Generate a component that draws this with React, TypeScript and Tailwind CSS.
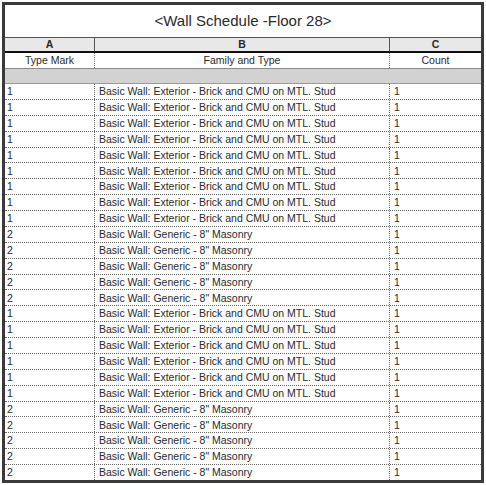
import React from 'react';

interface Row {
  mark: string;
  family: string;
  count: string;
}

const BRICK = 'Basic Wall: Exterior - Brick and CMU on MTL. Stud';
const MASONRY = 'Basic Wall: Generic - 8" Masonry';

// Schedule rows in the order they appear
const rows: Row[] = [
  ...Array(9).fill({ mark: '1', family: BRICK, count: '1' }),
  ...Array(5).fill({ mark: '2', family: MASONRY, count: '1' }),
  ...Array(6).fill({ mark: '1', family: BRICK, count: '1' }),
  ...Array(5).fill({ mark: '2', family: MASONRY, count: '1' }),
];

const App: React.FC = () => {
  return (
    <div
      className="w-[486px] h-[485px] bg-white pt-[2px] pl-[2px] text-[#2a2a2a]"
      style={{ fontFamily: '"Liberation Sans", Arial, sans-serif' }}
    >
      <div className="w-[482px] h-[481px] border-[3px] border-[#3a3a3a] flex flex-col overflow-hidden">
        {/* Title */}
        <div className="h-[33px] shrink-0 flex items-center justify-center text-[15px] border-b border-[#555]">
          &lt;Wall Schedule -Floor 28&gt;
        </div>

        {/* Column letters */}
        <div className="h-[15px] shrink-0 flex bg-[#e8e8e8] border-b-2 border-[#111] text-[10.5px] font-bold">
          <div className="w-[90px] flex items-center justify-center border-r border-[#555]">A</div>
          <div className="w-[295px] flex items-center justify-center border-r border-[#555]">B</div>
          <div className="flex-1 flex items-center justify-center">C</div>
        </div>

        {/* Field names */}
        <div className="h-[16px] shrink-0 flex border-b border-[#8a8a8a] text-[10.5px]">
          <div className="w-[90px] flex items-center justify-center border-r border-dotted border-[#777]">Type Mark</div>
          <div className="w-[295px] flex items-center justify-center border-r border-dotted border-[#777]">Family and Type</div>
          <div className="flex-1 flex items-center justify-center">Count</div>
        </div>

        {/* Group header band */}
        <div className="h-[15px] shrink-0 bg-[#d2d2d2] border-b border-[#9a9a9a]" />

        {/* Data */}
        <div className="flex-1 min-h-0 flex flex-col">
          {rows.map((row, i) => (
            <div
              key={i}
              className={`flex-1 min-h-0 flex text-[10.5px] leading-none ${i < rows.length - 1 ? 'border-b border-dotted border-[#666]' : ''}`}
            >
              <div className="w-[90px] flex items-center pl-[2px] border-r border-dotted border-[#666]">{row.mark}</div>
              <div className="w-[295px] flex items-center pl-[4px] border-r border-dotted border-[#666]">{row.family}</div>
              <div className="flex-1 flex items-center pl-[4px]">{row.count}</div>
            </div>
          ))}
        </div>
      </div>
    </div>
  );
};

export default App;
